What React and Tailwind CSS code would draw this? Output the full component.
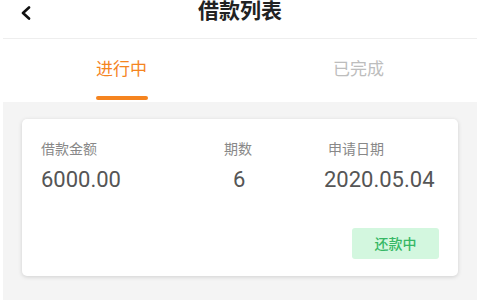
import React from "react";

const font = { fontFamily: '"Noto Sans", "Noto Sans CJK SC", sans-serif' };
const num = { fontFamily: 'Roboto, "Noto Sans", sans-serif' };

function App() {
  const items = [
    { amount: "6000.00", term: "6", date: "2020.05.04", status: "还款中" },
  ];

  return (
    <div className="w-[480px] h-[300px] bg-white overflow-hidden" style={font}>
      <div className="mx-[3px] h-full flex flex-col">
        {/* header */}
        <div className="relative h-[39px] border-b border-[#eeeeee] flex items-start justify-center">
          <button className="absolute left-[14px] top-[5px] w-[18px] h-[16px] flex items-center justify-center">
            <svg width="12" height="14" viewBox="0 0 12 14" fill="none">
              <path d="M9 1.5 L3 7 L9 12.5" stroke="#111" strokeWidth="2.6" strokeLinecap="round" strokeLinejoin="round" />
            </svg>
          </button>
          <h1 className="text-[21px] leading-[22px] font-bold text-[#222] -mt-[1px]">借款列表</h1>
        </div>

        {/* tabs */}
        <div className="h-[63px] flex">
          <div className="flex-1 flex flex-col items-center pt-[18px]">
            <span className="text-[17px] leading-[24px] text-[#f5841f]">进行中</span>
            <span className="mt-[15px] w-[52px] h-[4px] rounded-full bg-[#f5841f]" />
          </div>
          <div className="flex-1 flex flex-col items-center pt-[18px]">
            <span className="text-[17px] leading-[24px] text-[#bdbdbd]">已完成</span>
          </div>
        </div>

        {/* list */}
        <div className="flex-1 bg-[#f4f4f4] px-[19px] pt-[17px]">
          {items.map((item, i) => (
            <div key={i} className="h-[157px] bg-white rounded-[5px] shadow-[0_1px_4px_rgba(0,0,0,0.15)] px-[19px] pt-[20px]">
              <div className="flex">
                <div className="w-[183px]">
                  <div className="text-[14px] leading-[20px] text-[#888]">借款金额</div>
                  <div className="mt-[7px] text-[22px] leading-[28px] text-[#555]" style={num}>{item.amount}</div>
                </div>
                <div className="w-[100px]">
                  <div className="text-[14px] leading-[20px] text-[#888]">期数</div>
                  <div className="mt-[7px] text-[22px] leading-[28px] text-[#555] pl-[9px]" style={num}>{item.term}</div>
                </div>
                <div>
                  <div className="text-[14px] leading-[20px] text-[#888] pl-[4px]">申请日期</div>
                  <div className="mt-[7px] text-[22px] leading-[28px] text-[#555]" style={num}>{item.date}</div>
                </div>
              </div>
              <div className="flex justify-end mt-[34px]">
                <span className="w-[87px] h-[31px] rounded-[3px] bg-[#d3f7df] text-[#36b765] text-[14px] font-medium flex items-center justify-center">
                  {item.status}
                </span>
              </div>
            </div>
          ))}
        </div>
      </div>
    </div>
  );
}

export default App;
